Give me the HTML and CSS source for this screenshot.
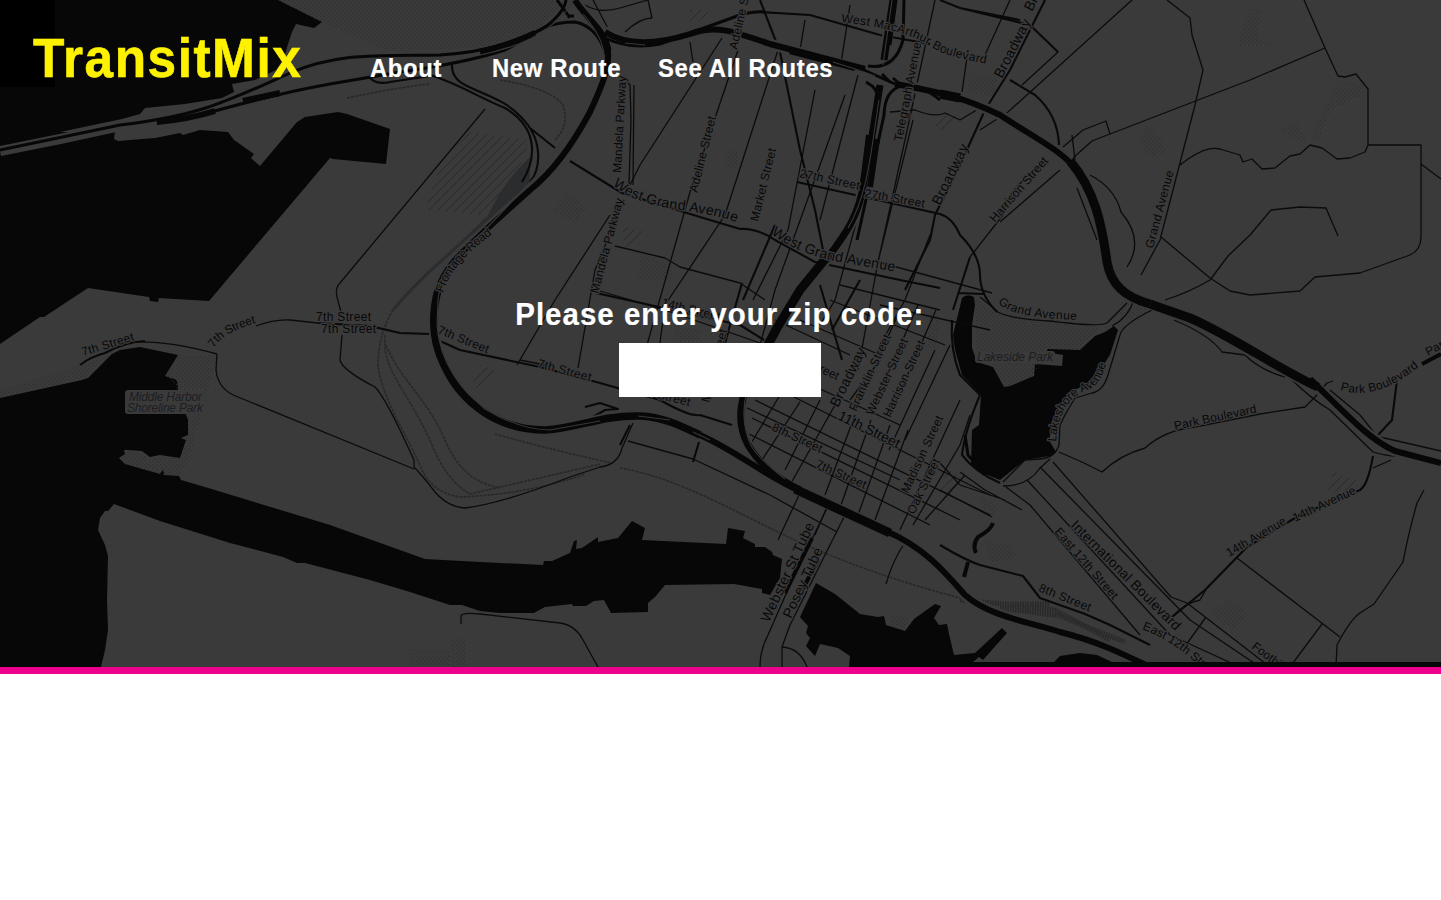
FILE: index.html
```html
<!DOCTYPE html>
<html lang="en">
<head>
<meta charset="utf-8">
<title>TransitMix</title>
<link rel="stylesheet" href="styles.css">
</head>
<body>
<main class="hero">
<svg class="map" viewBox="0 0 1441 667" width="1441" height="667" aria-hidden="true">
<defs>
<pattern id="dots" width="4" height="4" patternUnits="userSpaceOnUse"><path class="dot" d="M0 0h1v1H0zM2 2h1v1H2z"/></pattern>
<pattern id="hatch" width="9" height="9" patternUnits="userSpaceOnUse"><path class="hatchline" d="M0 9L9 0"/></pattern>
<path id="frontage" d="M443 293Q452 262 494 233"/>
<path id="wga1" d="M613 185Q632 203 680 210T737 223"/>
<path id="wga2" d="M771 234Q800 255 840 262T897 272"/>
<path id="macarthur" d="M841 22C895 29 915 36 930 46S960 58 987 64"/>
<path id="grand" d="M998 303Q1012 318 1079 320"/>
<path id="lakeshore" d="M1056 442C1058 410 1072 396 1085 391S1101 380 1107 361"/>
<path id="park2" d="M1340 390Q1378 402 1422 364"/>
<path id="seventh" d="M214 348Q222 333 256 323"/>
<path id="east12" d="M1142 629Q1165 638 1183 652T1215 680"/>
</defs>
<rect class="land" width="1441" height="667"/>
<g class="water">
<path d="M0 0H278L322 22 314 28 296 24 292 32 288 44 284 58 276 70 255 80 232 84 234 92 222 98 185 104 145 108 140 114 122 119 60 132 115 132 114 139 118 141 155 138 180 133 183 135 200 130 228 132 234 140 254 154 251 158 260 166 297 122 305 117 338 112 347 114 390 129 386 164 333 159 330 158 209 301 159 298 158 302 150 301 149 297 88 288 44 317 40 317 0 344Z"/>
<path d="M0 398L82 380 88 378 112 354 120 350 140 347 178 355 165 376 177 380 178 390 185 412 188 420 188 435 181 438 186 440 180 458 160 455 150 457 142 451 128 450 124 450 125 454 119 458 125 464 160 474 163 469 164 475 179 476 181 480 205 487 330 525 425 559 480 562 543 565 544 561 552 561 570 553 574 541 577 540 576 549 582 548 598 537 598 542 618 538 632 521 645 528 642 540 726 544 728 528 745 531 743 538 755 544 755 547 765 547 772 552 773 555 782 559 780 578 770 595 762 593 762 589 734 584 665 585 655 597 648 603 648 612 611 613 604 600 594 601 586 606 573 606 572 604 545 607 534 613 500 613 480 611 462 605 450 605 410 592 370 580 305 563 297 563 283 557 230 543 160 521 114 504 108 511 105 511 100 518 98 530 105 545 108 556 107 600 108 630 105 650 101 667H0Z"/>
<path d="M962 298Q967 293 974 297L975 305 972 325 972 348 977 362 993 367 1004 387 1010 386 1034 376 1035 364 1062 366 1063 355 1046 352 1048 349 1080 350 1095 336 1105 332 1114 326 1118 330 1110 355 1092 382 1070 392 1055 415 1049 440 1056 452 1050 456 1025 460 1000 480 985 474 971 465 972 430 979 425 981 395 962 375 955 350 953 335Z"/>
<path d="M816 583L835 594 860 614 878 617 884 616 886 625 905 631 914 619 935 604 941 606 934 618 939 625 947 624 949 634 954 655 975 653 1002 628 1007 633 983 660 979 657 973 662H1054L1060 656 1080 653 1097 655 1112 662H1441V667H849L850 656 838 648 820 644 815 656 806 646 810 638 806 633 808 626 800 617Z"/>
</g>
<rect class="corner" width="55" height="87"/>
<g class="parks">
<path d="M278 0H560L555 14 530 34 480 47 390 52 322 22Z"/>
<path d="M140 347L178 355 217 356 205 400 190 455 180 476 164 475 160 474 125 464 119 458 128 451 150 457 180 458 188 435 188 420 178 390 165 376 178 355Z"/>
<path d="M0 390L80 365 112 354 85 378 0 397Z"/>
<path d="M975 298L995 312 1100 326 1080 350 1046 350 1034 376 1006 387 993 367 975 360Z"/>
<path d="M1122 300L1152 308 1134 322 1118 314ZM1250 10L1262 10 1256 35 1270 45H1235ZM1146 125L1162 140 1166 152 1150 157 1140 142ZM1338 80L1365 84 1358 96 1330 110 1318 140 1310 138 1325 108ZM1295 120L1308 142 1295 140 1280 130ZM565 192L587 207 575 224 553 210ZM640 255L672 262V280H637ZM727 150H738V168H725ZM966 72L998 78 994 96 968 92ZM1228 598L1248 613 1232 630 1210 614ZM985 540L1010 545 1018 558 990 562ZM980 497L998 505 992 517 982 512ZM893 612L908 618 904 630 889 625ZM409 650H450V665H409ZM452 638H466V667H452ZM672 325L705 330 697 342 680 342ZM930 310L940 320 935 350 927 345Z"/>
</g>
<path class="hatched" d="M470 132L530 140 515 180 480 215 425 210 440 165ZM621 225L645 232 625 250ZM480 365L495 370 480 390 472 385ZM690 8L710 12 690 28ZM945 112L962 118 945 132 933 125ZM1335 472L1360 482 1345 495 1325 490ZM950 470L965 480 945 495 935 490Z"/>
<path class="yard" d="M530 157Q505 180 487 217L470 236 492 222 530 182Z"/>
<path class="railband" d="M487 218Q465 240 440 262T393 310"/>
<g class="rails">
<path d="M393 310Q378 335 378 365C382 400 410 440 422 470Q433 493 460 497 530 494 585 474"/>
<path d="M385 335C382 370 404 385 430 440Q445 480 470 494L600 464"/>
<path d="M386 345C400 380 425 395 445 440 460 475 480 484 500 488"/>
<path d="M495 434Q560 452 612 463M620 468C680 478 740 515 795 540S900 582 960 598"/>
<path d="M500 80Q550 88 563 105 570 125 555 140"/>
<path d="M347 98Q400 87 430 84"/>
</g>
<g class="railyard"><path d="M960 600L1005 604 1055 610 1110 640M1000 608L1060 616 1125 642M1010 604L1050 604"/></g>
<g class="bridge"><path d="M0 151L60 139 120 126"/></g>
<g class="minor">
<path d="M485 109L340 283Q335 288 337 297L343 320M342 335L340 360Q342 370 375 387 383 395 400 430L414 460V467Q422 475 435 492 448 507 465 508 500 504 570 477L600 467Q618 465 622 448L633 423"/>
<path d="M217 354L216 370Q218 390 238 397L414 469M217 354Q160 338 120 343M256 326Q275 319 290 320L318 323"/>
<path d="M461 624V616Q462 612 480 614L560 623Q575 625 583 640L598 667M760 667Q760 650 768 635L790 585 827 508M782 667V647L790 625 845 515M782 647Q800 648 807 667"/>
<path d="M628 441L693 459 770 495 837 532M800 493L778 540M827 507L815 535M904 544Q893 560 886 584"/>
<path d="M722 38L640 165 630 185M690 42L693 62M738 50L690 192 640 370M778 50L725 215 665 305 655 380M845 95L820 165 775 290 745 400M805 20L800 50M815 90L788 230 753 300M850 5L840 70M858 75L820 220M880 135L835 300 820 325M935 0L905 140 878 262 858 370M913 120L878 262M1010 0L985 55"/>
<path d="M624 78L630 85 631 120 629 185M634 85L633 185M624 200L595 270 578 368M610 215L555 300 517 365M615 246L665 258 680 267 740 283 765 300M600 291L665 310 780 350M545 365L520 360"/>
<path d="M593 0L610 32M585 5Q600 14 620 8L648 0 652 18M625 32Q640 18 652 18M890 112L915 110Q935 118 945 113L960 120 985 105M968 50L962 92M1132 0L1008 112 980 130M1058 52L1022 85"/>
<path d="M1167 0L1190 18 1192 35 1203 70 1195 105 1160 240 1141 275M1304 0L1325 48 1338 76 1345 77 1356 74 1368 89V145H1421V237Q1421 250 1410 255L1360 273 1315 277 1300 291 1250 295 1230 291 1210 278 1161 237M1325 48L1250 80 1110 134 1092 141 1073 158M1110 134L1106 121 1083 130 1063 147M1180 165Q1205 145 1220 149L1240 155 1243 162 1252 159 1262 169 1275 168 1290 156 1300 154 1310 145 1322 148 1337 159 1350 158 1365 152 1368 145M1421 164L1441 179M1271 210L1300 207 1326 208 1338 236M1271 210L1250 235 1228 256 1210 280Q1190 292 1165 300"/>
<path d="M1048 163Q1008 185 1003 215L970 257M1060 170L1000 222M1090 175Q1115 188 1121 212 1145 240 1127 267M1077 188L1097 240M1072 135L1075 160"/>
<path d="M878 262L992 293M930 235L905 300 880 345M880 305L990 330M840 285L940 310M830 300L945 345M800 320L880 355M775 320L850 355"/>
<path d="M755 400L990 515M752 418L960 520M749 434L930 525M780 390L990 495M800 380L900 425M745 407L900 480"/>
<path d="M780 395L750 445M800 402L762 460M820 400L785 470M835 405L790 485M855 415L825 495M871 420L841 505M890 425L858 515M908 430L875 520M935 350L889 450M950 345L905 440M960 400L900 530M970 415L960 445 913 525M965 475L925 520M880 360L850 400M900 310L855 410M918 305L872 410M936 310L890 415"/>
<path d="M1112 326Q1128 318 1134 300M1152 310Q1122 325 1120 335L1108 375Q1103 391 1092 393L1075 398Q1066 412 1060 425L1059 445Q1055 458 1040 459L1025 460 1003 482M1003 486Q1028 486 1040 468L1050 459M1059 452L1084 463 1102 472Q1120 455 1145 448 1165 430 1195 427L1260 414 1305 407 1315 397 1327 383 1333 381M1174 320Q1210 335 1222 352L1245 355Q1260 370 1285 377M1290 378Q1310 398 1330 410L1373 452Q1390 457 1400 456M1330 390L1360 415 1380 440M1380 437L1441 451M1373 468L1391 460"/>
<path d="M1027 480L1170 635 1240 667M1040 467L1190 620 1260 667M1053 462L1171 597 1187 603 1270 667M1006 487L1030 505 1140 635M960 472L985 490 1022 510M940 463L960 485 1005 500M940 490L992 517M1237 558L1340 637M1322 624L1290 667M1336 667L1337 645Q1350 620 1360 613L1374 604 1403 562Q1408 535 1417 503L1424 490M1206 617L1186 645M1172 617Q1185 603 1200 600L1208 586"/>
<path d="M980 297Q990 305 998 312 1010 319 1050 321 1105 328 1108 322L1127 303"/>
</g>
<g class="middle">
<path d="M80 365Q90 357 105 353 125 342 145 341"/>
<path d="M318 323L370 326 400 333 430 334M440 341L460 350 540 367 600 383 660 400Q690 417 700 415L732 425M570 161L622 193 700 217 740 229Q757 228 775 240L815 262 900 280 940 288"/>
<path d="M760 0L780 52 800 150 815 210 823 250M820 285L842 360M797 182L940 214Q953 218 960 235 980 255 980 275 980 295 997 312M1045 0L1010 70 985 110 960 165 935 215 930 240 905 290"/>
<path d="M760 12L810 15 880 35 930 44M960 8L1020 20M1010 80L1035 95Q1058 115 1059 145M940 0L960 8 1030 25 1058 52"/>
<path d="M970 257L953 310M952 320Q950 350 960 375L980 395Q965 430 962 455 975 472 1000 483M958 293L983 294"/>
<path d="M1397 380L1392 420 1378 435M1373 456Q1368 485 1360 490L1300 515 1247 547 1205 590 1172 617M940 545Q965 560 980 565L1023 576 1040 598 1085 614 1110 625 1150 645"/>
<path d="M630 425L620 445M699 442L693 462M742 283L730 325 710 400M596 293L740 325 780 350M775 225L743 300M860 280L832 330"/>
<path d="M585 407L600 403 618 409 605 410 593 417"/>
<path d="M452 64Q451 78 465 85C485 95 505 100 520 116 545 140 540 170 530 182M430 75C455 82 480 98 505 108 542 130 534 163 522 182M530 128L555 148"/>
<path d="M370 78Q377 85 390 82L430 76"/>
</g>
<path class="bold" d="M993 523Q991 530 978 537 972 545 976 553M968 562L964 577M1422 364L1441 354"/>
<g class="casing">
<path d="M575 0C583 14 600 26 607 45 612 65 600 90 590 112 575 140 555 170 530 190L490 226C465 250 445 265 438 290 430 320 434 345 444 365 462 405 500 430 545 430 580 428 600 415 640 416 665 417 685 428 700 435"/>
<path d="M893 0L884 60C876 100 872 140 864 180 860 215 845 235 826 260L777 328 757 365C740 395 735 420 748 445"/>
<path d="M700 435C740 453 765 476 800 491L890 533C925 548 945 572 965 595 990 617 1030 622 1060 632 1100 642 1125 655 1150 667"/>
<path d="M605 30C625 45 655 45 690 34 715 25 730 30 770 44L865 71 895 84C940 92 965 98 1000 115 1035 138 1060 150 1075 168 1095 190 1102 225 1107 262 1111 285 1125 297 1150 304L1190 318 1320 390C1350 418 1370 440 1395 451L1441 463"/>
</g>
<g class="highway">
<path d="M0 150L120 125C200 116 230 100 290 73 340 52 380 56 440 55 490 52 530 38 548 25 560 15 565 8 566 0"/>
<path d="M157 123C200 119 240 100 330 84L400 72C450 65 480 58 505 50 530 38 540 22 575 22 592 25 602 40 606 55"/>
<path class="wide" d="M157 122Q190 119 215 111M243 101L280 93M480 52Q515 43 535 33"/>
<path class="wide" d="M575 0C583 14 600 26 607 45 612 65 600 90 590 112 575 140 555 170 530 190L490 226C465 250 445 265 438 290"/>
<path class="wider" d="M438 290C430 320 434 345 444 365 462 405 500 430 545 430 580 428 600 415 640 416 665 417 685 428 700 435"/>
<path class="wide" d="M700 435C740 453 765 476 800 491"/>
<path class="widest" d="M795 489L890 533"/>
<path class="wide" d="M886 531C925 548 945 572 965 595 990 617 1030 622 1060 632 1100 642 1125 655 1150 667"/>
<path class="wide" d="M605 32C625 45 655 45 690 34 715 25 730 30 770 44L865 69"/>
<path d="M605 38Q630 50 660 44L740 15Q755 11 765 12M855 66L895 84M582 12Q605 28 610 50"/>
<path class="wide" d="M790 51L855 68M895 84C940 92 965 98 1000 115 1035 138 1060 150 1075 168"/>
<path class="widest" d="M940 94L960 98"/>
<path class="widest" d="M1070 161C1095 190 1102 225 1107 262 1111 285 1125 297 1150 304"/>
<path class="widest" d="M1150 304L1190 318C1230 335 1280 370 1318 387"/>
<path class="wide" d="M1310 379C1350 418 1370 440 1395 451L1441 463"/>
<path class="double" d="M893 0L884 60M880 85C876 110 872 140 864 180 860 215 845 235 826 260"/>
<path d="M904 0L903 40Q895 70 868 66M896 0L890 45M866 82Q885 92 875 112M940 100C910 76 885 82 884 115L870 180M867 195L857 240M893 78L902 86M882 74L890 82"/>
<path class="widest" d="M826 258L800 290 777 328 757 365"/>
<path class="double" d="M757 365C740 395 735 420 748 445 762 468 780 480 800 490"/>
<path class="station" d="M869 135L863 183M877 139L870 187"/>
<path d="M557 0Q572 20 568 16M568 16L574 16M965 435L968 455 985 475"/>
</g>
<g class="median">
<path d="M480 55Q525 46 548 28T571 0M583 14Q610 45 603 70M570 132L540 172 485 230Q440 270 438 300L437 325C440 365 460 386 485 409Q520 430 550 430L600 421M638 416L670 420M693 432L710 440M892 0L883 65M879 100C871 150 868 195 848 228M756 372C738 400 743 430 752 447Q760 460 785 479M625 43L645 45M833 62L855 69 875 76"/>
</g>
<g class="tubes"><path d="M785 593L812 538M798 598L818 560"/></g>
<rect class="land" x="125" y="390" width="79" height="24" rx="3"/>
<rect class="land" x="975" y="351" width="80" height="12" rx="3"/>
<g class="labels">
<text transform="translate(83 356) rotate(-17)" textLength="54">7th Street</text>
<text textLength="50"><textPath href="#seventh">7th Street</textPath></text>
<text x="316" y="321" textLength="55">7th Street</text>
<text x="321" y="333" textLength="55">7th Street</text>
<text transform="translate(437 333) rotate(22)" textLength="54">7th Street</text>
<text transform="translate(537 367) rotate(15)" textLength="55">7th Street</text>
<text transform="translate(636 393) rotate(14)" textLength="55">7th Street</text>
<text textLength="78"><textPath href="#frontage">Frontage Road</textPath></text>
<text transform="translate(621 173) rotate(-87)" textLength="97">Mandela Parkway</text>
<text transform="translate(598 294) rotate(-75)" textLength="98">Mandela Parkway</text>
<text transform="translate(697 193) rotate(-76)" textLength="78">Adeline Street</text>
<text transform="translate(737 50) rotate(-77)" textLength="78">Adeline Street</text>
<text transform="translate(758 222) rotate(-76)" textLength="75">Market Street</text>
<text transform="translate(709 403) rotate(-76)" textLength="75">Market Street</text>
<text class="large" textLength="130"><textPath href="#wga1">West Grand Avenue</textPath></text>
<text class="large" textLength="130"><textPath href="#wga2">West Grand Avenue</textPath></text>
<text transform="translate(799 177) rotate(12)" textLength="61">27th Street</text>
<text transform="translate(864 197) rotate(10)" textLength="61">27th Street</text>
<text class="large" transform="translate(940 206) rotate(-64)" textLength="66">Broadway</text>
<text class="large" transform="translate(1002 79) rotate(-63)" textLength="64">Broadway</text>
<text class="large" transform="translate(1032 12) rotate(-63)" textLength="64">Broadway</text>
<text textLength="152"><textPath href="#macarthur">West MacArthur Boulevard</textPath></text>
<text transform="translate(902 142) rotate(-79)" textLength="101">Telegraph Avenue</text>
<text transform="translate(995 223) rotate(-49)" textLength="82">Harrison Street</text>
<text transform="translate(1153 249) rotate(-75)" textLength="80">Grand Avenue</text>
<text textLength="82"><textPath href="#grand">Grand Avenue</textPath></text>
<text textLength="98"><textPath href="#lakeshore">Lakeshore Avenue</textPath></text>
<text transform="translate(1175 430) rotate(-12)" textLength="84">Park Boulevard</text>
<text textLength="86"><textPath href="#park2">Park Boulevard</textPath></text>
<text transform="translate(1428 356) rotate(-28)">Park Boulevard</text>
<text class="large" transform="translate(838 408) rotate(-64)" textLength="64">Broadway</text>
<text transform="translate(856 412) rotate(-65)" textLength="83">Franklin Street</text>
<text transform="translate(873 416) rotate(-65)" textLength="83">Webster Street</text>
<text transform="translate(890 418) rotate(-65)" textLength="83">Harrison Street</text>
<text class="large" transform="translate(837 419) rotate(26)" textLength="67">11th Street</text>
<text transform="translate(771 430) rotate(25)" textLength="54">8th Street</text>
<text transform="translate(815 467) rotate(24)" textLength="54">7th Street</text>
<text transform="translate(785 356) rotate(25)" textLength="57">12th Street</text>
<text transform="translate(661 306) rotate(14)" textLength="60">14th Street</text>
<text transform="translate(908 494) rotate(-65)" textLength="84">Madison Street</text>
<text transform="translate(914 515) rotate(-64)" textLength="60">Oak Street</text>
<text class="large" transform="translate(769 623) rotate(-65)" textLength="108">Webster St Tube</text>
<text class="large" transform="translate(791 619) rotate(-65)" textLength="76">Posey Tube</text>
<text class="large" transform="translate(1070 526) rotate(45)" textLength="149">International Boulevard</text>
<text transform="translate(1054 532) rotate(49)" textLength="90">East 12th Street</text>
<text textLength="88"><textPath href="#east12">East 12th Street</textPath></text>
<text transform="translate(1038 591) rotate(22)" textLength="55">8th Street</text>
<text transform="translate(1229 557) rotate(-30)" textLength="67">14th Avenue</text>
<text transform="translate(1295 522) rotate(-25)" textLength="68">14th Avenue</text>
<text transform="translate(1251 648) rotate(37)" textLength="95">Foothill Boulevard</text>
</g>
<g class="parknames">
<text x="129" y="401" textLength="73">Middle Harbor</text>
<text x="127" y="412" textLength="76">Shoreline Park</text>
<text x="977" y="361" textLength="76">Lakeside Park</text>
</g>
<rect class="shore" x="975" y="662" width="466" height="5"/>
</svg>
<div class="content">
<header class="topbar">
<h1 class="brand">TransitMix</h1>
<nav class="nav">
<a class="link about">About</a>
<a class="link new">New Route</a>
<a class="link all">See All Routes</a>
</nav>
</header>
<form class="zip">
<label class="prompt" for="zip">Please enter your zip code:</label>
<input class="field" id="zip" type="text">
</form>
</div>
</main>
</body>
</html>
```
FILE: styles.css
```css
* { box-sizing: border-box; }
body { margin: 0; background: #fff; font-family: "Liberation Sans", Arial, sans-serif; }
.hero { display: grid; height: 674px; overflow: hidden; border-bottom: 7px solid #ec008c; background: #3a3a3b; }
.map, .content { grid-area: 1 / 1; }
.map { display: block; }
.content { z-index: 1; }
.land { fill: #3a3a3b; }
.water path, .shore { fill: #070707; }
.corner { fill: #000; }
.parks path { fill: url(#dots); }
.dot { fill: #2c2c2d; }
.hatched { fill: url(#hatch); }
.hatchline { stroke: #242425; stroke-width: .8; }
.yard { fill: #2a2c2e; }
.map g path { stroke-linejoin: round; }
.railband { fill: none; stroke: #2b2d2f; stroke-width: 3; }
.rails { fill: none; stroke: #272829; stroke-width: 1.6; stroke-dasharray: 3 1; }
.railyard { fill: none; stroke: #29292a; stroke-width: 5; stroke-dasharray: 1.5 1; }
.bridge { fill: none; stroke: #3a3a3b; stroke-width: 10; }
.minor { fill: none; stroke: #0b0b0b; stroke-width: 1.3; }
.middle { fill: none; stroke: #090909; stroke-width: 2.1; }
.bold { fill: none; stroke: #080808; stroke-width: 4; }
.casing { fill: none; stroke: #3a3a3b; stroke-width: 11; }
.highway { fill: none; stroke: #070707; stroke-width: 3; }
.wide { stroke-width: 6; }
.wider { stroke-width: 7.5; }
.widest { stroke-width: 9; }
.double { stroke-width: 7; }
.station { stroke-width: 6; }
.median { fill: none; stroke: #38383a; stroke-width: 1.1; }
.tubes { fill: none; stroke: #070707; stroke-width: 4; }
.labels { font-size: 12px; fill: #080808; stroke: #3a3a3b; stroke-width: 2.4px; stroke-linejoin: round; paint-order: stroke; }
.large { font-size: 14px; }
.parknames { font-size: 12px; font-style: italic; fill: #1d1d1e; }
.topbar { display: flex; align-items: baseline; height: 300px; padding: 26px 0 0 33px; }
.brand { width: 337px; margin: 0; color: #fff200; font-size: 55px; line-height: 64px; font-weight: 700; letter-spacing: 1.6px; transform: scaleX(.935); transform-origin: left; -webkit-text-stroke: .6px #fff200; }
.nav { display: flex; color: #fff; font-size: 25.5px; font-weight: 700; letter-spacing: .7px; white-space: nowrap; -webkit-text-stroke: .2px #fff; }
.link { transform: scaleX(.935); transform-origin: left; }
.about { width: 122px; }
.new { width: 166px; }
.zip { display: flex; flex-direction: column; align-items: center; padding-right: 1px; }
.prompt { height: 43px; color: #fff; font-size: 31.5px; line-height: 29px; font-weight: 700; letter-spacing: 1.1px; white-space: nowrap; transform: scaleX(.935); -webkit-text-stroke: .2px #fff; }
.field { width: 202px; height: 54px; padding: 8px; border: 1px solid #fff; background: #fff; font-size: 30px; }
```
